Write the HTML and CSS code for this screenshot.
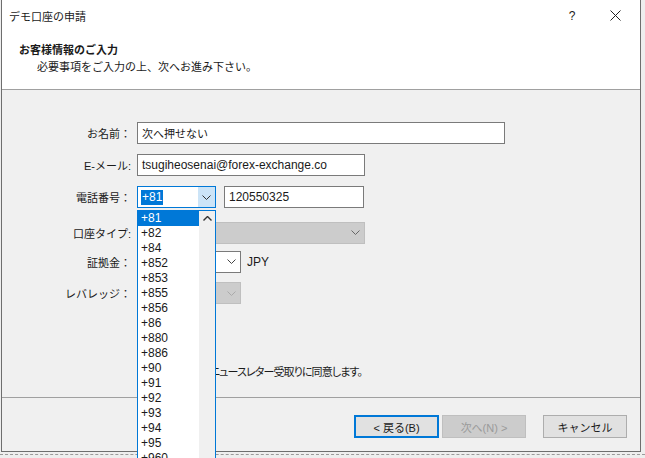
FILE: index.html
```html
<!DOCTYPE html>
<html lang="ja">
<head>
<meta charset="utf-8">
<title>デモ口座の申請</title>
<link rel="stylesheet" href="styles.css">
</head>
<body>
<div class="dialog">
  <div class="titlebar">
    <span class="title">デモ口座の申請</span>
    <span class="help">?</span>
    <span class="close"><svg width="11" height="11" viewBox="0 0 11 11"><path d="M0.5 0.5 L10.5 10.5 M10.5 0.5 L0.5 10.5" stroke="#222" stroke-width="1" fill="none"/></svg></span>
  </div>
  <div class="header">
    <div class="h-title">お客様情報のご入力</div>
    <div class="h-sub">必要事項をご入力の上、次へお進み下さい。</div>
  </div>
  <div class="content">
    <div class="form">
      <div class="label">お名前：</div>
      <div class="ctl"><div class="input w-name">次へ押せない</div></div>

      <div class="label">E-メール:</div>
      <div class="ctl"><div class="input w-mail latin">tsugiheosenai@forex-exchange.co</div></div>

      <div class="label">電話番号：</div>
      <div class="ctl">
        <div class="combo phone">
          <span class="val latin"><span class="sel">+81</span></span>
          <span class="drop focus"><svg width="9" height="5" viewBox="0 0 9 5"><polyline points="0.5,0.5 4.5,4.5 8.5,0.5" fill="none" stroke="#333"/></svg></span>
          <div class="list">
            <div class="items latin">
              <div class="item active">+81</div>
              <div class="item">+82</div>
              <div class="item">+84</div>
              <div class="item">+852</div>
              <div class="item">+853</div>
              <div class="item">+855</div>
              <div class="item">+856</div>
              <div class="item">+86</div>
              <div class="item">+880</div>
              <div class="item">+886</div>
              <div class="item">+90</div>
              <div class="item">+91</div>
              <div class="item">+92</div>
              <div class="item">+93</div>
              <div class="item">+94</div>
              <div class="item">+95</div>
              <div class="item">+960</div>
            </div>
            <div class="scroll">
              <span class="up"><svg width="9" height="5" viewBox="0 0 9 5"><polyline points="0.5,4.5 4.5,0.5 8.5,4.5" fill="none" stroke="#333" stroke-width="1.4"/></svg></span>
            </div>
          </div>
        </div>
        <div class="input w-tel latin">120550325</div>
      </div>

      <div class="label r-acct">口座タイプ:</div>
      <div class="ctl r-acct">
        <div class="combo disabled w-acct"><span class="val"></span><span class="drop"><svg width="9" height="5" viewBox="0 0 9 5"><polyline points="0.5,0.5 4.5,4.5 8.5,0.5" fill="none" stroke="#666"/></svg></span></div>
      </div>

      <div class="label r-margin">証拠金：</div>
      <div class="ctl r-margin">
        <div class="combo w-small"><span class="val"></span><span class="drop"><svg width="9" height="5" viewBox="0 0 9 5"><polyline points="0.5,0.5 4.5,4.5 8.5,0.5" fill="none" stroke="#444"/></svg></span></div>
        <span class="unit latin">JPY</span>
      </div>

      <div class="label">レバレッジ：</div>
      <div class="ctl">
        <div class="combo disabled w-small"><span class="val"></span><span class="drop"><svg width="9" height="5" viewBox="0 0 9 5"><polyline points="0.5,0.5 4.5,4.5 8.5,0.5" fill="none" stroke="#aaa"/></svg></span></div>
      </div>
    </div>
    <div class="agree">
      <span class="check"></span>
      <span class="agree-text">ニュースレター受取りに同意します。</span>
    </div>
  </div>
  <div class="footer">
    <div class="btn default">&lt; 戻る(B)</div>
    <div class="btn off">次へ(N) &gt;</div>
    <div class="btn cancel">キャンセル</div>
  </div>
</div>
<div class="under"></div>
</body>
</html>
```

FILE: styles.css
```css
html, body {
  margin: 0;
  padding: 0;
}
body {
  width: 645px;
  height: 458px;
  overflow: hidden;
  background: #eeeeee;
  font-family: "Liberation Sans", "Noto Sans CJK JP", sans-serif;
  font-size: 11px;
  color: #1a1a1a;
}
.latin {
  font-family: "Liberation Sans", sans-serif;
  font-size: 12px;
}
.dialog {
  margin-left: 1px;
  width: 640px;
  height: 452px;
  box-sizing: border-box;
  border: 1px solid #6e6e6e;
  border-top: none;
  background: #f0f0f0;
  display: flex;
  flex-direction: column;
}
.titlebar {
  height: 31px;
  background: #fff;
  display: flex;
  align-items: center;
  padding-left: 7px;
  padding-right: 3px;
}
.title { flex: 1; }
.help {
  width: 42px;
  text-align: center;
  font-family: "Liberation Sans", sans-serif;
  font-size: 12px;
}
.close {
  width: 44px;
  display: flex;
  justify-content: center;
}
.header {
  height: 59px;
  box-sizing: border-box;
  background: #fff;
  border-bottom: 1px solid #a0a0a0;
  padding: 11px 0 0 17px;
  line-height: 17px;
}
.h-title { font-weight: bold; }
.h-sub { margin-left: 18px; }
.content {
  height: 308px;
  box-sizing: border-box;
  border-bottom: 1px solid #a0a0a0;
  padding-top: 32px;
}
.form {
  display: grid;
  grid-template-columns: 129px auto;
  column-gap: 6px;
  row-gap: 10px;
  grid-auto-rows: 22px;
}
.label {
  display: flex;
  align-items: center;
  justify-content: flex-end;
}
.ctl {
  display: flex;
  align-items: center;
  gap: 8px;
}
.r-acct { margin-top: 7px; }
.r-margin { margin-top: 1px; }
.input {
  height: 22px;
  box-sizing: border-box;
  border: 1px solid #7a7a7a;
  background: #fff;
  padding-left: 4px;
  display: flex;
  align-items: center;
}
.w-name { width: 368px; }
.w-mail { width: 228px; }
.w-tel { width: 140px; }
.combo {
  position: relative;
  height: 22px;
  box-sizing: border-box;
  border: 1px solid #7a7a7a;
  background: #fff;
  display: flex;
}
.combo .val {
  flex: 1;
  display: flex;
  align-items: center;
  padding-left: 3px;
}
.combo .drop {
  width: 17px;
  display: flex;
  align-items: center;
  justify-content: center;
}
.combo.phone {
  width: 79px;
  border-color: #0078d7;
}
.combo .drop.focus { background: #cce4f7; }
.sel {
  background: #0078d7;
  color: #fff;
  padding: 0 1px;
  line-height: 15px;
}
.combo.disabled {
  background: #cccccc;
  border-color: #bfbfbf;
}
.w-acct { width: 228px; }
.w-small { width: 104px; }
.unit { margin-left: -2px; }
.list {
  position: absolute;
  top: 23px;
  left: -1px;
  width: 79px;
  height: 260px;
  box-sizing: border-box;
  border: 1px solid #0078d7;
  background: #fff;
  display: flex;
  z-index: 5;
}
.items { width: 61px; }
.item {
  height: 15px;
  line-height: 15px;
  padding-left: 3px;
}
.item.active {
  background: #0078d7;
  color: #fff;
}
.scroll {
  flex: 1;
  background: #f0f0f0;
}
.up {
  height: 15px;
  display: flex;
  align-items: center;
  justify-content: center;
}
.agree {
  margin-top: 59px;
  margin-left: 137px;
  display: flex;
  align-items: center;
  height: 16px;
}
.check {
  width: 13px;
  height: 13px;
  box-sizing: border-box;
  border: 1px solid #333;
  background: #fff;
}
.agree-text {
  margin-left: 58px;
  font-feature-settings: "palt";
  letter-spacing: -0.9px;
}
.footer {
  flex: 1;
  display: flex;
  justify-content: flex-end;
  align-items: flex-start;
  padding-top: 17px;
  padding-right: 13px;
  gap: 3px;
}
.btn {
  width: 84px;
  height: 23px;
  box-sizing: border-box;
  display: flex;
  align-items: center;
  justify-content: center;
  background: #e1e1e1;
  border: 1px solid #adadad;
}
.btn.default {
  border: 2px solid #0078d7;
  width: 85px;
}
.btn.off {
  background: #cccccc;
  border-color: #bfbfbf;
  color: #9a9a9a;
}
.btn.cancel { margin-left: 14px; }
.under {
  margin-top: 2px;
  height: 0;
  border-top: 1px dashed #9a9a9a;
}
```
